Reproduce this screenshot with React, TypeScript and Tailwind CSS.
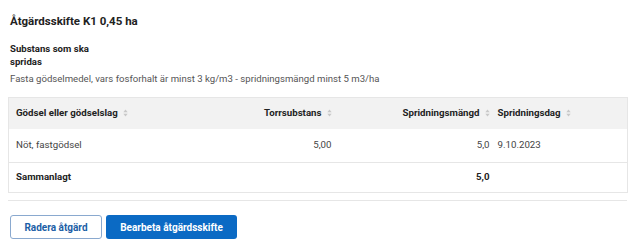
function SortIcon() {
  return (
    <svg width="5" height="8" viewBox="0 0 5 8" className="ml-[5px] inline-block shrink-0">
      <path d="M2.5 0.5 L4.7 3.2 L0.3 3.2 Z" fill="#c8c8c8" />
      <path d="M2.5 7.5 L4.7 4.8 L0.3 4.8 Z" fill="#c8c8c8" />
    </svg>
  )
}

const rows = [{ name: "Nöt, fastgödsel", ts: "5,00", amount: "5,0", date: "9.10.2023" }]

export default function App() {
  return (
    <div className="min-h-screen bg-white px-[10px] pt-[13px] text-[#222] [font-family:Roboto,'Liberation_Sans',sans-serif]">
      <h2 className="text-[11.5px] font-bold leading-[16px]">Åtgärdsskifte K1 0,45 ha</h2>

      <div className="mt-[13px] w-[84px] text-[9.6px] font-bold leading-[13px]">Substans som ska spridas</div>
      <p className="mt-[4px] text-[9.6px] leading-[13px] text-[#555]">
        Fasta gödselmedel, vars fosforhalt är minst 3 kg/m3 - spridningsmängd minst 5 m3/ha
      </p>

      <table className="-mx-[2px] mt-[12px] w-[619px] table-fixed border-collapse border border-[#e6e6e6] text-[9.7px]">
        <colgroup>
          <col className="w-[200px]" />
          <col className="w-[127px]" />
          <col className="w-[158px]" />
          <col className="w-[134px]" />
        </colgroup>
        <thead>
          <tr className="h-[31px] bg-[#f2f2f2]">
            <th className="pl-[7px] text-left font-bold">
              <span className="inline-flex items-center">Gödsel eller gödselslag<SortIcon /></span>
            </th>
            <th className="pr-[4px] text-right font-bold">
              <span className="inline-flex items-center">Torrsubstans<SortIcon /></span>
            </th>
            <th className="pr-[4px] text-right font-bold">
              <span className="inline-flex items-center">Spridningsmängd<SortIcon /></span>
            </th>
            <th className="pl-[4px] text-left font-bold">
              <span className="inline-flex items-center">Spridningsdag<SortIcon /></span>
            </th>
          </tr>
        </thead>
        <tbody>
          {rows.map((r) => (
            <tr key={r.name} className="h-[34px] border-b border-[#e6e6e6] text-[#444]">
              <td className="pl-[7px]">{r.name}</td>
              <td className="pr-[4px] text-right">{r.ts}</td>
              <td className="pr-[4px] text-right">{r.amount}</td>
              <td className="pl-[4px]">{r.date}</td>
            </tr>
          ))}
          <tr className="h-[30px] font-bold">
            <td className="pl-[7px]">Sammanlagt</td>
            <td></td>
            <td className="pr-[4px] text-right">5,0</td>
            <td></td>
          </tr>
        </tbody>
      </table>

      <div className="-mx-[2px] mt-[7px] w-[619px] border-t border-[#e6e6e6]" />

      <div className="mt-[14px] flex gap-[4px]">
        <button className="h-[24px] w-[92px] rounded-[3px] border border-[#8aa9cf] bg-white text-[10px] font-bold text-[#1b5ea6]">
          Radera åtgärd
        </button>
        <button className="h-[24px] w-[131px] rounded-[3px] bg-[#0b6ac4] text-[10px] font-bold text-white">
          Bearbeta åtgärdsskifte
        </button>
      </div>
    </div>
  )
}
